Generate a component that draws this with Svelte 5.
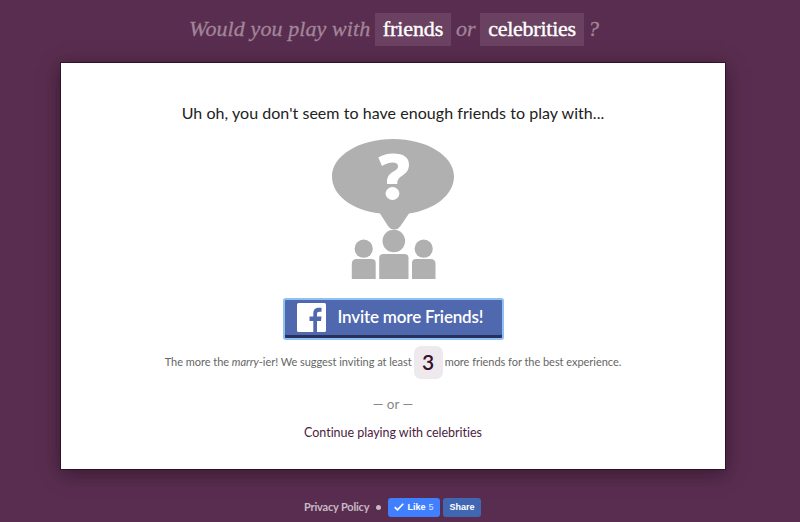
<script>
  const choices = ['friends', 'celebrities'];
  const needed = 3;
</script>

<main class="page">
  <h1 class="question">
    <em class="lead">Would you play with</em>
    <span class="choice first">{choices[0]}</span>
    <em class="or">or</em>
    <span class="choice second">{choices[1]}</span>
    <em class="mark">?</em>
  </h1>

  <section class="card">
    <p class="notice">Uh oh, you don't seem to have enough friends to play with...</p>

    <svg class="crowd" width="124" height="142" viewBox="0 0 124 142" fill="#b0b0b0" aria-hidden="true">
      <path d="M62 1C95.500 1 123 17.500 123 38.500C123 57 103 72 78 75.500L69.500 88Q66.500 92 63.500 91.500Q60 92 57 88L49 75.500C21 72.500 1 57 1 38.500C1 17.500 28.500 1 62 1Z" />
      <path d="M47.300 19.500Q54 15.500 62 15.500Q78 15.500 78 27Q78 33.500 71.500 37.500C67 40.500 66.300 42 66.300 46H56V44.500C56 39 57.500 36.500 62.500 33.500C66 31.500 67 30.500 67 28Q67 24.500 61.500 24.500Q56.500 24.500 51 28Z" fill="#fff" />
      <ellipse cx="61.500" cy="55.500" rx="6.900" ry="6.500" fill="#fff" />
      <circle cx="62.800" cy="103" r="11.300" />
      <path d="M48.200 141V120Q48.200 116 52.200 116H73.500Q77.500 116 77.500 120V141Z" />
      <circle cx="32.700" cy="110.700" r="9.100" />
      <path d="M20.800 141V126Q20.800 121 25.800 121H40.500Q44.700 121 44.700 125V141Z" />
      <circle cx="92.700" cy="110.700" r="9.100" />
      <path d="M81 141V125Q81 121 85 121H99.500Q104.500 121 104.500 126V141Z" />
    </svg>

    <button class="invite">
      <svg width="29" height="29" viewBox="0 0 29 29" aria-hidden="true">
        <rect width="29" height="29" rx="1.500" fill="#fff" />
        <path d="M16.300 29V18H12.500V13.500H16.300V10.500C16.300 6.500 18.500 4.800 22.300 4.800H24.500V8.800H22.700C20.800 8.800 20 9.500 20 11V13.500H24.500L24 18H20V29Z" fill="#5068ae" />
      </svg>
      <span>Invite more Friends!</span>
    </button>

    <p class="suggest">
      <span class="before">The more the <i>marry</i>-ier! We suggest inviting at least</span>
      <b class="count">{needed}</b>
      <span class="after">more friends for the best experience.</span>
    </p>
    <p class="divider">— or —</p>
    <a class="continue" href="#celebrities">Continue playing with celebrities</a>
  </section>

  <footer>
    <a class="privacy" href="#privacy">Privacy Policy</a>
    <i class="dot"></i>
    <button class="fb like">
      <svg width="10" height="8" viewBox="0 0 10 8" fill="none" stroke="#fff" stroke-width="1.600" aria-hidden="true"><path d="M.7 4.200L3.500 6.800L9.300 .8" /></svg>
      <span>Like</span><small>5</small>
    </button>
    <button class="fb share">Share</button>
  </footer>
</main>

<style>
  :global(body) { margin: 0; background: #592d4f; }
  * { box-sizing: border-box; }
  .page {
    width: 800px;
    height: 522px;
    overflow: hidden;
    padding-top: 13px;
    background: #592d4f;
    font-family: Lato, sans-serif;
    font-variant-ligatures: none;
  }
  p, h1 { margin: 0; white-space: nowrap; }
  a { text-decoration: none; }
  button { border: 0; margin: 0; padding: 0; }
  .question {
    display: flex;
    height: 33px;
    padding-left: 189px;
    font: 400 22px/31px "Liberation Serif", serif;
    color: #a28599;
    -webkit-text-stroke: 0.3px #a28599;
  }
  .lead { width: 186px; letter-spacing: 0.1px; }
  .or { width: 29px; padding-left: 5px; }
  .mark { padding-left: 4px; }
  .choice {
    background: #6a4161;
    color: #fff;
    text-align: center;
    -webkit-text-stroke: 0.4px #fff;
  }
  .first { width: 76px; letter-spacing: -0.1px; }
  .second { width: 104px; letter-spacing: -0.25px; }
  .card {
    display: flex;
    flex-direction: column;
    align-items: center;
    width: 664px;
    height: 406px;
    margin: 17px 0 0 61px;
    padding-top: 39px;
    background: #fff;
    box-shadow: 0 0 0 1px rgba(25, 5, 20, .55), 0 4px 18px rgba(20, 5, 18, .5);
  }
  .notice { font-size: 16px; line-height: 22px; letter-spacing: 0.045px; color: #222; }
  .crowd { display: block; margin-top: 14px; }
  .invite {
    display: flex;
    align-items: center;
    width: 217px;
    height: 38px;
    margin-top: 20px;
    padding: 0 0 3px 12px;
    background: #5068ae;
    border-radius: 1px;
    box-shadow: inset 0 -3px #27315f, 0 0 0 2px #8fc1f5;
    color: #fff;
    font: 600 17px/34px Lato, sans-serif;
    letter-spacing: -0.18px;
  }
  .invite span { position: relative; top: -1px; margin-left: 12px; white-space: nowrap; }
  .suggest {
    display: flex;
    align-items: center;
    height: 33px;
    margin-top: 8px;
    font-size: 11px;
    letter-spacing: -0.035px;
    color: #666;
  }
  .before, .after { position: relative; top: -1px; }
  .count {
    width: 29px;
    height: 33px;
    margin: 0 2px;
    border-radius: 7px;
    background: #eee9ed;
    color: #35112e;
    text-align: center;
    font: 600 21px/32px Lato, sans-serif;
  }
  .divider { margin-top: 15px; font-size: 13.500px; line-height: 20px; color: #888; }
  .continue { margin-top: 9px; font-size: 12.500px; line-height: 20px; letter-spacing: -0.03px; color: #4a1d41; }
  footer { display: flex; align-items: center; height: 20px; margin: 28px 0 0 304px; }
  .privacy { width: 66px; font: 700 11px/20px Lato, sans-serif; letter-spacing: -0.18px; color: #c8b9c4; white-space: nowrap; }
  .dot { width: 5px; height: 5px; margin: 0 7px 0 6px; border-radius: 50%; background: #c8b9c4; }
  .fb {
    display: flex;
    align-items: center;
    justify-content: center;
    height: 19px;
    border-radius: 3px;
    color: #fff;
    font: 700 9px/19px "Liberation Sans", sans-serif;
  }
  .like { width: 52px; background: #4080ff; }
  .like span { margin-left: 3px; }
  .like small { margin-left: 3px; font-size: 9px; font-weight: 400; color: #d9e6ff; }
  .share { width: 38px; margin-left: 3px; background: #4267b2; }
</style>
